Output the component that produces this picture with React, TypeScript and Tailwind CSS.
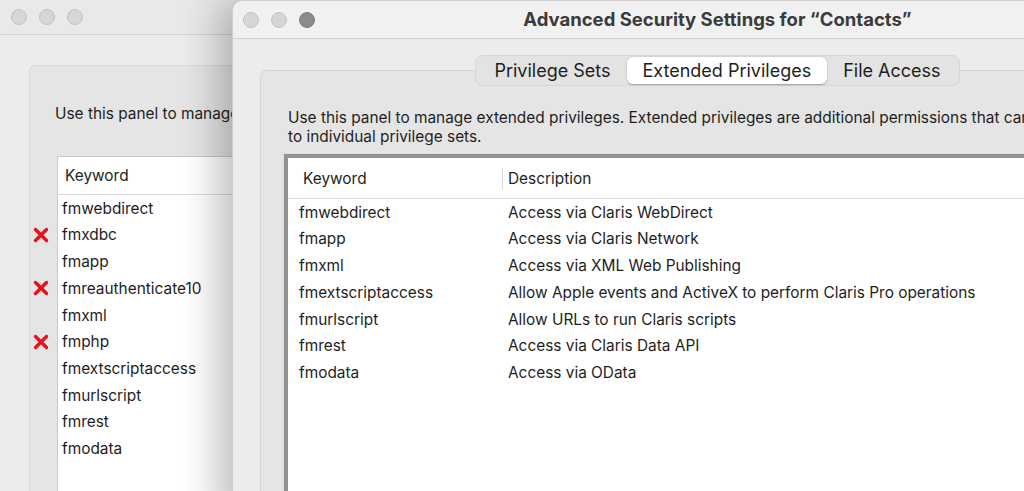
import React from "react";

const backKeywords: { key: string; removed?: boolean }[] = [
  { key: "fmwebdirect" },
  { key: "fmxdbc", removed: true },
  { key: "fmapp" },
  { key: "fmreauthenticate10", removed: true },
  { key: "fmxml" },
  { key: "fmphp", removed: true },
  { key: "fmextscriptaccess" },
  { key: "fmurlscript" },
  { key: "fmrest" },
  { key: "fmodata" },
];

const privileges = [
  ["fmwebdirect", "Access via Claris WebDirect"],
  ["fmapp", "Access via Claris Network"],
  ["fmxml", "Access via XML Web Publishing"],
  ["fmextscriptaccess", "Allow Apple events and ActiveX to perform Claris Pro operations"],
  ["fmurlscript", "Allow URLs to run Claris scripts"],
  ["fmrest", "Access via Claris Data API"],
  ["fmodata", "Access via OData"],
];

function TrafficLights({ active }: { active?: boolean }) {
  return (
    <div className="flex items-center gap-[12px]">
      <span className="h-[16px] w-[16px] rounded-full border border-[#c3c3c3] bg-[#d6d6d6]" />
      <span className="h-[16px] w-[16px] rounded-full border border-[#c3c3c3] bg-[#d6d6d6]" />
      <span
        className={
          active
            ? "h-[16px] w-[16px] rounded-full border border-[#7e7e7e] bg-[#8b8b8b]"
            : "h-[16px] w-[16px] rounded-full border border-[#c3c3c3] bg-[#d6d6d6]"
        }
      />
    </div>
  );
}

function RedCross() {
  return (
    <svg width="16" height="16" viewBox="0 0 16 16">
      <path d="M2.5 2.5 L13.5 13.5 M13.5 2.5 L2.5 13.5" stroke="#e8101a" strokeWidth="3.4" strokeLinecap="round" />
    </svg>
  );
}

function BackWindow() {
  return (
    <div className="absolute left-0 top-0 h-[491px] w-[250px] bg-[#ececec]">
      <div className="flex h-[35px] items-center border-b border-[#d2d2d2] bg-[#e9e9e9] pl-[11px]">
        <TrafficLights />
      </div>
      <div className="ml-[29px] mt-[30px] h-[460px] rounded-tl-[6px] border-l border-t border-[#d8d8d8] bg-[#e5e5e5]">
        <p className="whitespace-nowrap pl-[25px] pt-[38px] text-[15.4px] leading-[19px] text-[#1e1e1e]">
          Use this panel to manage extended privileges.
        </p>
        <div className="mt-[33px] flex">
          <div className="w-[27px] pt-[39px]">
            {backKeywords.map((k) => (
              <div key={k.key} className="flex h-[26.7px] items-center pl-[3px]">
                {k.removed && <RedCross />}
              </div>
            ))}
          </div>
          <div className="h-[360px] flex-1 border border-[#c9c9c9] bg-white">
            <div className="flex h-[38px] items-center border-b border-[#d9d9d9] pl-[7px] text-[15.4px] text-[#1e1e1e]">
              Keyword
            </div>
            {backKeywords.map((k) => (
              <div key={k.key} className="flex h-[26.7px] items-center pl-[4px] text-[15.4px] text-[#1e1e1e]">
                {k.key}
              </div>
            ))}
          </div>
        </div>
      </div>
    </div>
  );
}

function Tabs() {
  return (
    <div className="relative z-10 flex justify-center">
      <div className="flex h-[31px] items-center rounded-[8px] border border-[#d6d6d6] bg-[#e3e3e3] px-[2px] text-[18px] text-[#1e1e1e]">
        <span className="px-[16px]">Privilege Sets</span>
        <span className="flex h-[27px] items-center rounded-[6px] bg-white px-[16px] shadow-[0_0.5px_1.5px_rgba(0,0,0,0.3)]">
          Extended Privileges
        </span>
        <span className="px-[16px]">File Access</span>
      </div>
    </div>
  );
}

function FrontWindow() {
  return (
    <div className="absolute left-[232px] top-0 h-[520px] w-[970px] rounded-tl-[10px] border-l border-t border-[#cfcfcf] bg-[#ececec] shadow-[-12px_0_40px_rgba(0,0,0,0.28)]">
      <div className="relative flex h-[38px] items-center rounded-tl-[10px] border-b border-[#d3d3d3] bg-[#f1f1f1] pl-[10px]">
        <TrafficLights active />
        <div className="absolute inset-x-0 top-0 flex h-[37px] items-center justify-center text-[18.5px] font-bold text-[#3b3b3b]">
          Advanced Security Settings for “Contacts”
        </div>
      </div>
      <div className="mt-[16px]">
        <Tabs />
        <div className="mx-[27px] -mt-[16px] h-[480px] rounded-t-[6px] border border-[#d6d6d6] bg-[#e5e5e5] pl-[27px] pt-[37px]">
          <p className="whitespace-nowrap text-[15.4px] leading-[19px] text-[#1e1e1e]">
            Use this panel to manage extended privileges. Extended privileges are additional permissions that can be assigned
            <br />
            to individual privilege sets.
          </p>
          <div className="-ml-[4px] mt-[8px] h-[400px] border-[4px] border-[#939393] bg-white outline outline-1 outline-[#dcdcdc]">
            <div className="flex h-[41px] items-center border-b border-[#dcdcdc] pt-[2px] text-[15.4px] text-[#1e1e1e]">
              <span className="w-[214px] pl-[15px]">Keyword</span>
              <span className="h-[22px] w-px bg-[#d6d6d6]" />
              <span className="pl-[5px]">Description</span>
            </div>
            {privileges.map(([key, desc]) => (
              <div key={key} className="flex h-[26.7px] items-center text-[15.4px] text-[#1e1e1e]">
                <span className="w-[220px] pl-[11px]">{key}</span>
                <span className="whitespace-nowrap">{desc}</span>
              </div>
            ))}
          </div>
        </div>
      </div>
    </div>
  );
}

export default function App() {
  return (
    <div
      className="relative h-[491px] w-[1024px] overflow-hidden bg-[#ececec]"
      style={{ fontFamily: "Inter, 'Noto Sans', sans-serif" }}
    >
      <BackWindow />
      <FrontWindow />
    </div>
  );
}
